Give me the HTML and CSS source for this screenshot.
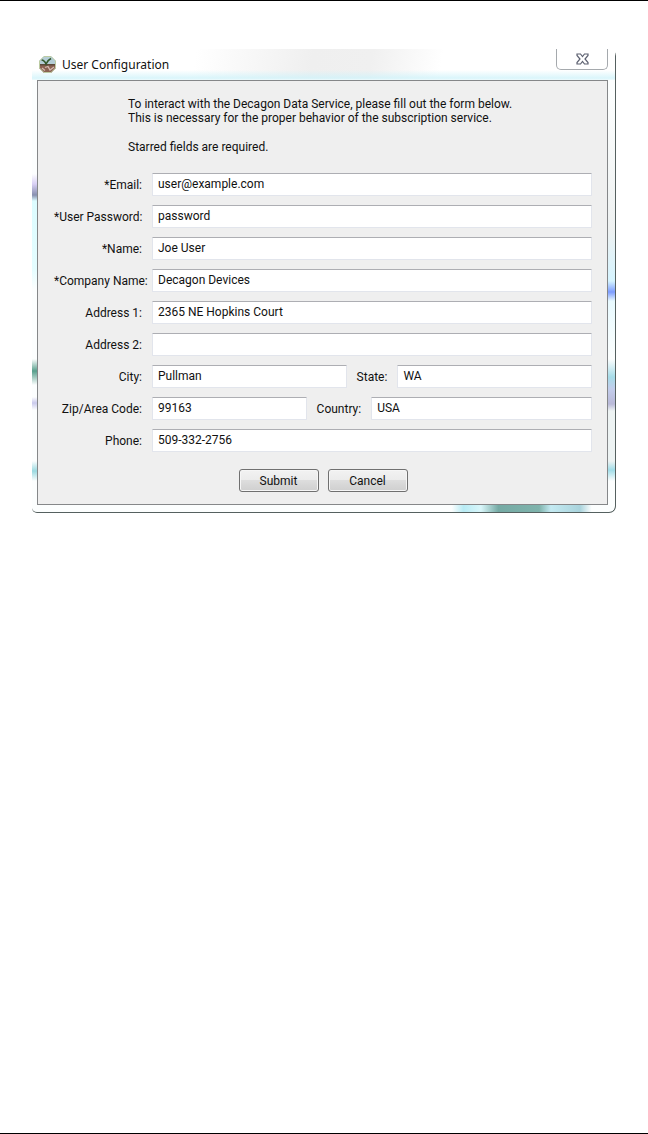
FILE: index.html
```
<!DOCTYPE html>
<html lang="en">
<head>
    <meta charset="UTF-8">
    <meta name="viewport" content="width=device-width, initial-scale=1.0">
    <title>User Configuration</title>
    <link rel="stylesheet" href="styles.css">
</head>
<body>
    <div class="window">
        <div class="title-bar">
            <svg class="app-icon" viewBox="0 0 17 17" aria-hidden="true">
                <clipPath id="badge"><path d="M5 0h7l5 5v7l-5 5H5l-5-5V5z"/></clipPath>
                <g clip-path="url(#badge)">
                    <rect width="17" height="9" fill="#b4cdd6"/>
                    <rect y="8" width="17" height="9" fill="#8a6252"/>
                    <path d="M0 8h17v1.500H0z" fill="#5d4a3a"/>
                    <path d="M6 11.500l3-1 2 3.500 4-3M3 12l3 2.500" fill="none" stroke="#d3b8b0" stroke-width="1.300"/>
                    <path d="M2.500 4c2 0 3.500 1.500 4.500 4 1-3 3-4.500 5-5.500" fill="none" stroke="#34592c" stroke-width="1.600"/>
                </g>
                <path d="M5 .5h7L16.500 5v7L12 16.500H5L.5 12V5z" fill="none" stroke="#bccba2"/>
            </svg>
            <h1>User Configuration</h1>
            <button type="button" class="close-btn" aria-label="Close">
                <svg viewBox="0 0 13 12" width="13" height="12" aria-hidden="true">
                    <path d="M1 1h3.500l2 2.500L8.500 1H12v1.500L9 6l3 3.500V11H8.500l-2-2.500-2 2.500H1V9.500L4 6 1 2.500z" fill="#fff" stroke="#5c6070" stroke-width="1.200"/>
                </svg>
            </button>
        </div>
        <form class="panel">
            <div class="intro">
                <p>To interact with the Decagon Data Service, please fill out the form below.<br>
                This is necessary for the proper behavior of the subscription service.</p>
                <p>Starred fields are required.</p>
            </div>
            <div class="form-row">
                <label for="email">*Email:</label>
                <input type="text" id="email" value="user@example.com">
            </div>
            <div class="form-row">
                <label for="password">*User Password:</label>
                <input type="text" id="password" value="password">
            </div>
            <div class="form-row">
                <label for="name">*Name:</label>
                <input type="text" id="name" value="Joe User">
            </div>
            <div class="form-row">
                <label for="company">*Company Name:</label>
                <input type="text" id="company" value="Decagon Devices">
            </div>
            <div class="form-row">
                <label for="address1">Address 1:</label>
                <input type="text" id="address1" value="2365 NE Hopkins Court">
            </div>
            <div class="form-row">
                <label for="address2">Address 2:</label>
                <input type="text" id="address2">
            </div>
            <div class="form-row">
                <label for="city">City:</label>
                <div class="split">
                    <input type="text" id="city" value="Pullman">
                    <label for="state">State:</label>
                    <input type="text" id="state" value="WA">
                </div>
            </div>
            <div class="form-row">
                <label for="zip">Zip/Area Code:</label>
                <div class="split split-zip">
                    <input type="text" id="zip" value="99163">
                    <label for="country">Country:</label>
                    <input type="text" id="country" value="USA">
                </div>
            </div>
            <div class="form-row">
                <label for="phone">Phone:</label>
                <input type="text" id="phone" value="509-332-2756">
            </div>
            <div class="button-row">
                <button type="submit" class="button">Submit</button>
                <button type="button" class="button">Cancel</button>
            </div>
        </form>
    </div>
</body>
</html>
```
FILE: styles.css
```
* {
    box-sizing: border-box;
}
body {
    margin: 0;
    min-height: 100vh;
    padding: 48px 32px;
    border-top: 1px solid #000;
    border-bottom: 1px solid #000;
    background-color: #fff;
    font-family: Roboto, Tahoma, sans-serif;
    font-size: 12px;
    line-height: 14px;
    color: #111;
}

/* Glass frame, with the desktop showing through the edges */
.window {
    padding: 0 7px 7px 5px;
    border: 1px solid #55605f;
    border-top: 0;
    border-left: 0;
    border-radius: 3px 7px 7px 5px;
    background:
        linear-gradient(90deg, transparent 72%, #b8ebf4 74%, #d9f6fa 77%, #75aaa4 80%, #7fb3ac 87%, #c4eaf2 89%, #a9d3dc 94%, transparent 96%) bottom / 100% 7px no-repeat,
        linear-gradient(transparent 125px, #d9d0f5 135px, #8890b0 146px, #dcfcff 152px, #e4fdff 220px, transparent 240px, transparent 310px, #579f8c 322px, transparent 336px, transparent 348px, #c9c9ec 354px, transparent 361px, transparent 412px, #9ad9e0 422px, transparent 432px) left / 6px 100% no-repeat,
        linear-gradient(transparent 45px, #eef1f1 180px, #d5f4ff 232px, #7d9cff 243px, #e8faff 252px, transparent 310px, #a6dce8 328px, #c3cdec 340px, #b9b9d8 355px, #edf3f3 362px, #edf3f3 412px, #a0dde8 421px, transparent 432px) right / 7px 100% no-repeat,
        #fcfefe;
}
.title-bar {
    display: flex;
    align-items: center;
    height: 31px;
    margin: 0 -7px 0 -5px;
    padding: 0 7px;
    background:
        linear-gradient(transparent 68%, rgba(208, 243, 250, 0.8) 94%, #eefafc),
        linear-gradient(100deg, #fff 28%, #efefef 48%, #f0f0f0 58%, #fff 70%);
}
.app-icon {
    width: 17px;
    height: 17px;
}
.title-bar h1 {
    flex: 1;
    margin: 0 0 0 6px;
    font-family: "Noto Sans", "Segoe UI", sans-serif;
    font-size: 12px;
    font-weight: normal;
}
.close-btn {
    display: flex;
    align-items: center;
    justify-content: center;
    align-self: flex-start;
    width: 52px;
    height: 21px;
    padding: 0;
    border: 1px solid #a5a9ad;
    border-top: 0;
    border-radius: 0 0 5px 5px;
    background-color: #fff;
}
.panel {
    padding: 16px 15px 12px 16px;
    border: 1px solid #858789;
    background-color: #efefef;
}
.intro {
    margin-left: 74px;
    padding-bottom: 4px;
}
.intro p {
    margin: 0 0 15px;
}
.form-row {
    display: grid;
    grid-template-columns: 88px 1fr;
    gap: 10px;
    align-items: center;
    margin-bottom: 9px;
}
.form-row label {
    text-align: right;
    white-space: nowrap;
}
input {
    width: 100%;
    min-width: 0;
    height: 23px;
    padding: 0 5px 2px;
    border: 1px solid #e2e5ec;
    border-top-color: #adaeb3;
    border-radius: 1px;
    background-color: #fff;
    font: inherit;
    color: inherit;
}
.split {
    display: grid;
    grid-template-columns: 1fr auto 1fr;
    gap: 10px;
    align-items: center;
}
.split-zip {
    grid-template-columns: 7fr auto 10fr;
}
.button-row {
    display: flex;
    justify-content: center;
    gap: 9px;
    margin-top: 17px;
}
.button {
    width: 80px;
    height: 23px;
    padding: 0;
    border: 1px solid #707070;
    border-radius: 3px;
    background: linear-gradient(#f2f2f2, #ebebeb 50%, #dddddd 50%, #cfcfcf);
    box-shadow: inset 0 0 0 1px #f6f6f6;
    font: inherit;
    color: inherit;
}
```
